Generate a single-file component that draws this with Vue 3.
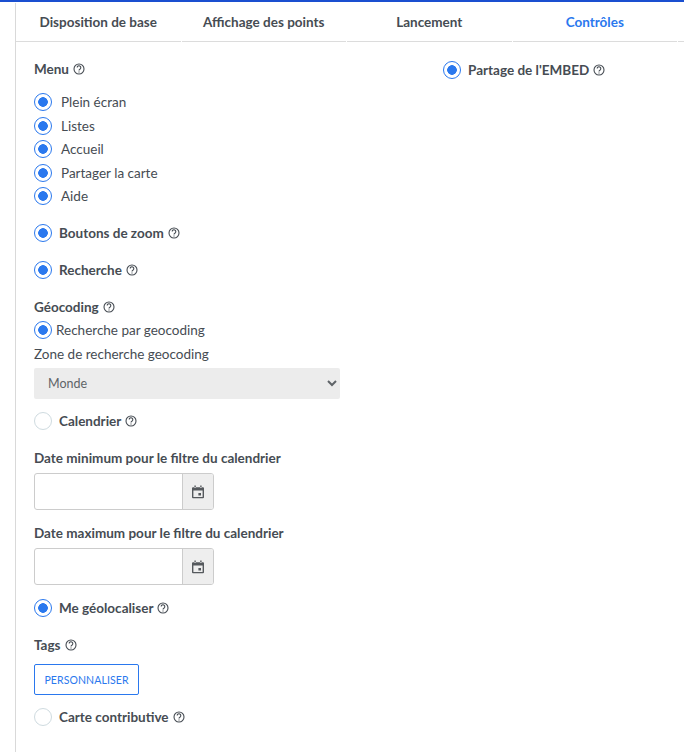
<script setup>
const tabs = [
  { label: 'Disposition de base', active: false },
  { label: 'Affichage des points', active: false },
  { label: 'Lancement', active: false },
  { label: 'Contrôles', active: true }
]
const menuItems = ['Plein écran', 'Listes', 'Accueil', 'Partager la carte', 'Aide']
const dateFields = ['Date minimum pour le filtre du calendrier', 'Date maximum pour le filtre du calendrier']
</script>

<template>
  <div class="page">
    <div class="panel">
      <nav class="tabs">
        <div v-for="tab in tabs" :key="tab.label" class="tab" :class="{ active: tab.active }">{{ tab.label }}</div>
        <div class="tab-rest"></div>
      </nav>
      <div class="content">
        <div class="col-left">
          <div class="heading menu-heading">
            <span>Menu</span>
            <svg class="help" viewBox="0 0 12 12"><circle cx="6" cy="6" r="5" /><path d="M4.2 4.6a1.8 1.8 0 1 1 2.9 1.4c-.7.5-1.1.8-1.1 1.5" /><path d="M6 8.5v1" /></svg>
          </div>
          <div class="menu-list">
            <div v-for="item in menuItems" :key="item" class="menu-item">
              <span class="radio on"></span>
              <span>{{ item }}</span>
            </div>
          </div>
          <div class="radio-row zoom-row">
            <span class="radio on"></span>
            <span class="strong">Boutons de zoom</span>
            <svg class="help" viewBox="0 0 12 12"><circle cx="6" cy="6" r="5" /><path d="M4.2 4.6a1.8 1.8 0 1 1 2.9 1.4c-.7.5-1.1.8-1.1 1.5" /><path d="M6 8.5v1" /></svg>
          </div>
          <div class="radio-row search-row">
            <span class="radio on"></span>
            <span class="strong">Recherche</span>
            <svg class="help" viewBox="0 0 12 12"><circle cx="6" cy="6" r="5" /><path d="M4.2 4.6a1.8 1.8 0 1 1 2.9 1.4c-.7.5-1.1.8-1.1 1.5" /><path d="M6 8.5v1" /></svg>
          </div>
          <div class="heading geo-heading">
            <span>Géocoding</span>
            <svg class="help" viewBox="0 0 12 12"><circle cx="6" cy="6" r="5" /><path d="M4.2 4.6a1.8 1.8 0 1 1 2.9 1.4c-.7.5-1.1.8-1.1 1.5" /><path d="M6 8.5v1" /></svg>
          </div>
          <div class="geo-radio">
            <span class="radio on"></span>
            <span>Recherche par geocoding</span>
          </div>
          <div class="zone-label">Zone de recherche geocoding</div>
          <select class="zone-select">
            <option>Monde</option>
          </select>
          <div class="radio-row calendar-row">
            <span class="radio"></span>
            <span class="strong">Calendrier</span>
            <svg class="help" viewBox="0 0 12 12"><circle cx="6" cy="6" r="5" /><path d="M4.2 4.6a1.8 1.8 0 1 1 2.9 1.4c-.7.5-1.1.8-1.1 1.5" /><path d="M6 8.5v1" /></svg>
          </div>
          <div v-for="field in dateFields" :key="field" class="date-field">
            <div class="heading date-label">{{ field }}</div>
            <div class="date-input">
              <div class="date-text"></div>
              <div class="date-addon">
                <svg class="cal" viewBox="0 0 14 14"><path d="M2 2.2h10a1 1 0 0 1 1 1v9a1 1 0 0 1-1 1H2a1 1 0 0 1-1-1v-9a1 1 0 0 1 1-1zM2.4 5.6v6.5h9.2V5.6zM3.4.6h1.4v2.4H3.4zM9.2.6h1.4v2.4H9.2zM7.4 8h2.6v2.6H7.4z" fill-rule="evenodd" /></svg>
              </div>
            </div>
          </div>
          <div class="radio-row locate-row">
            <span class="radio on"></span>
            <span class="strong">Me géolocaliser</span>
            <svg class="help" viewBox="0 0 12 12"><circle cx="6" cy="6" r="5" /><path d="M4.2 4.6a1.8 1.8 0 1 1 2.9 1.4c-.7.5-1.1.8-1.1 1.5" /><path d="M6 8.5v1" /></svg>
          </div>
          <div class="heading tags-heading">
            <span>Tags</span>
            <svg class="help" viewBox="0 0 12 12"><circle cx="6" cy="6" r="5" /><path d="M4.2 4.6a1.8 1.8 0 1 1 2.9 1.4c-.7.5-1.1.8-1.1 1.5" /><path d="M6 8.5v1" /></svg>
          </div>
          <button class="custom-btn" type="button">PERSONNALISER</button>
          <div class="radio-row contrib-row">
            <span class="radio"></span>
            <span class="strong">Carte contributive</span>
            <svg class="help" viewBox="0 0 12 12"><circle cx="6" cy="6" r="5" /><path d="M4.2 4.6a1.8 1.8 0 1 1 2.9 1.4c-.7.5-1.1.8-1.1 1.5" /><path d="M6 8.5v1" /></svg>
          </div>
        </div>
        <div class="col-right">
          <div class="radio-row">
            <span class="radio on"></span>
            <span class="strong">Partage de l'EMBED</span>
            <svg class="help" viewBox="0 0 12 12"><circle cx="6" cy="6" r="5" /><path d="M4.2 4.6a1.8 1.8 0 1 1 2.9 1.4c-.7.5-1.1.8-1.1 1.5" /><path d="M6 8.5v1" /></svg>
          </div>
        </div>
      </div>
    </div>
  </div>
</template>

<style scoped>
.page {
  width: 684px;
  height: 752px;
  overflow: hidden;
  background: #fff;
  border-top: 2px solid #1a4fd0;
  box-sizing: border-box;
  font-family: Lato, "Liberation Sans", sans-serif;
  font-size: 13.5px;
  line-height: 18px;
  color: #464c53;
}
.panel {
  margin-left: 15px;
  height: 100%;
  margin-top: 1px;
  border-left: 1px solid #d9d9d9;
}
.tabs {
  display: flex;
  height: 39px;
}
.tab {
  width: 164.5px;
  margin-right: 1px;
  flex: none;
  box-sizing: border-box;
  border-bottom: 1px solid #dcdcdc;
  text-align: center;
  font-weight: 700;
  line-height: 38px;
  color: #464c53;
}
.tab.active { color: #2a78ee; }
.tab-rest { flex: 1; border-bottom: 1px solid #dcdcdc; box-sizing: border-box; }
.content {
  display: grid;
  grid-template-columns: 409px 1fr;
  padding: 0 0 0 18px;
}
.col-left {
  display: flex;
  flex-direction: column;
  align-items: flex-start;
  width: 306px;
}
.col-right { padding-top: 19px; }
.heading {
  display: flex;
  align-items: center;
  gap: 4px;
  font-weight: 700;
}
.menu-heading { margin-top: 18px; }
.help {
  width: 12px;
  height: 12px;
  flex: none;
  fill: none;
  stroke: #464c53;
  stroke-width: 1.1;
}
.radio {
  width: 18px;
  height: 18px;
  box-sizing: border-box;
  flex: none;
  border-radius: 50%;
  border: 1px solid #cfdbe0;
  background: #fff;
}
.radio.on {
  border-color: #2a78ee;
  background: radial-gradient(circle, #2a78ee 0 4.5px, #fff 5.1px);
}
.menu-list {
  margin-top: 15px;
  display: flex;
  flex-direction: column;
  gap: 5.5px;
}
.menu-item {
  display: flex;
  align-items: center;
  gap: 9px;
  height: 18px;
}
.radio-row {
  display: flex;
  align-items: center;
  gap: 7px;
  height: 18px;
}
.strong { font-weight: 700; }
.radio-row .help { margin-left: -3px; }
.zoom-row { margin-top: 19px; }
.search-row { margin-top: 19px; }
.geo-heading { margin-top: 19px; }
.geo-radio {
  display: flex;
  align-items: center;
  gap: 4px;
  margin-top: 5px;
  height: 18px;
}
.zone-label { margin-top: 6px; }
.zone-select {
  margin-top: 5px;
  width: 306px;
  height: 31px;
  border: none;
  border-radius: 2px;
  background-color: #ececec;
  padding: 0 10px;
  font-family: inherit;
  font-size: 12.5px;
  color: #5f6468;
}
.calendar-row { margin-top: 13px; }
.date-field { display: flex; flex-direction: column; }
.date-label { margin-top: 14px; }
.calendar-row + .date-field .date-label { margin-top: 19px; }
.date-input {
  display: flex;
  width: 180px;
  height: 37px;
  margin-top: 6px;
  box-sizing: border-box;
  border: 1px solid #cccccc;
  border-radius: 3px;
  overflow: hidden;
}
.date-text { flex: 1; }
.date-addon {
  width: 30px;
  display: flex;
  align-items: center;
  justify-content: center;
  background: #eeeeee;
  border-left: 1px solid #cccccc;
}
.cal { width: 14px; height: 14px; fill: #55595d; }
.locate-row { margin-top: 14px; }
.tags-heading { margin-top: 19px; }
.custom-btn {
  margin-top: 10px;
  width: 105px;
  height: 31px;
  padding: 0;
  box-sizing: border-box;
  background: #fff;
  border: 1px solid #2a78ee;
  border-radius: 2px;
  color: #2a78ee;
  font-family: inherit;
  font-size: 10.5px;
  letter-spacing: 0.1px;
}
.contrib-row { margin-top: 13px; }
</style>
